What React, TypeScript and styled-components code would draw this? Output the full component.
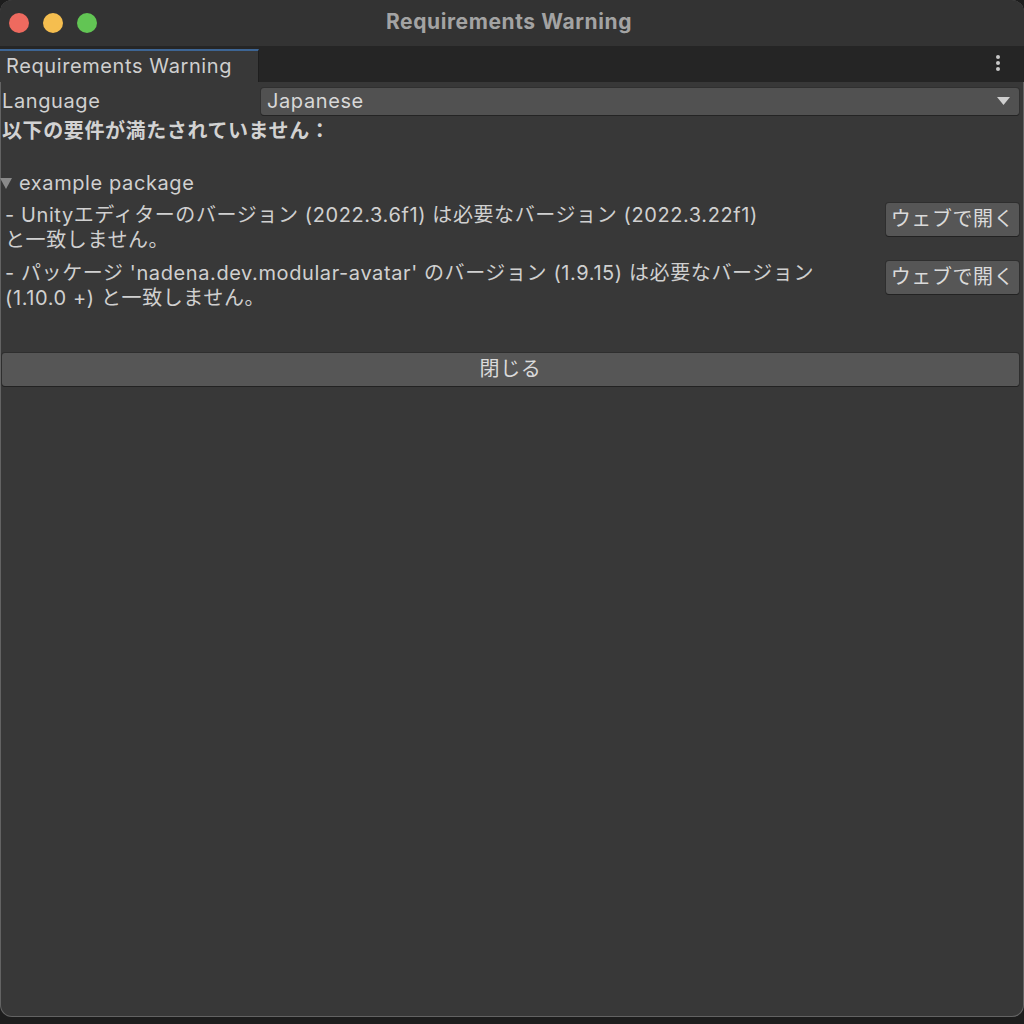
import React from "react";
import styled, { createGlobalStyle } from "styled-components";

const Global = createGlobalStyle`
  html, body { margin: 0; padding: 0; background: #1d1d1d; }
  body { font-family: Inter, "Noto Sans CJK JP", sans-serif; letter-spacing: 0.6px; }
  * { box-sizing: border-box; }
`;

const Window = styled.div`
  width: 1024px;
  height: 1017px;
  background: #383838;
  border-radius: 12px;
  overflow: hidden;
  display: flex;
  flex-direction: column;
  box-shadow: inset 0 0 0 1px rgba(255, 255, 255, 0.22);
  position: relative;
`;

const TitleBar = styled.div`
  height: 46px;
  flex: 0 0 46px;
  background: #333333;
  display: flex;
  align-items: center;
  padding-left: 9px;
  position: relative;
`;

const Lights = styled.div`
  display: flex;
  gap: 14px;
`;

const Light = styled.span<{ $c: string }>`
  width: 20px;
  height: 20px;
  border-radius: 50%;
  background: ${(p) => p.$c};
`;

const Title = styled.div`
  position: absolute;
  left: 0;
  right: 0;
  top: 0;
  height: 46px;
  line-height: 43px;
  text-align: center;
  padding-right: 6px;
  font-weight: 700;
  font-size: 21px;
  letter-spacing: 0.6px;
  color: #a3a3a3;
  pointer-events: none;
`;

const TabBar = styled.div`
  height: 36px;
  flex: 0 0 36px;
  background: #252525;
  display: flex;
  align-items: flex-end;
  justify-content: space-between;
`;

const Tab = styled.div`
  width: 259px;
  height: 33px;
  background: #383838;
  border-top: 2px solid #3d6594;
  border-right: 1px solid #1e1e1e;
  color: #cfcfcf;
  font-size: 20px;
  line-height: 30px;
  padding-left: 6px;
  white-space: nowrap;
`;

const Kebab = styled.div`
  width: 52px;
  height: 36px;
  display: flex;
  flex-direction: column;
  align-items: center;
  justify-content: center;
  gap: 2px;
  padding-bottom: 2px;
  align-self: stretch;
  span {
    width: 4px;
    height: 4px;
    border-radius: 50%;
    background: #c8c8c8;
  }
`;

const Content = styled.div`
  display: flex;
  flex-direction: column;
  padding: 4px 5px 0 2px;
  color: #d0d0d0;
  font-size: 20px;
`;

const LangRow = styled.div`
  display: flex;
  align-items: center;
  height: 29px;
`;

const LangLabel = styled.div`
  width: 259px;
  flex: 0 0 259px;
  line-height: 28px;
`;

const Dropdown = styled.div`
  flex: 1;
  height: 27px;
  margin-top: 1px;
  background: #515151;
  border-radius: 3px;
  box-shadow: 0 1px 0 #242424, 0 0 0 1px #303030;
  display: flex;
  align-items: center;
  justify-content: space-between;
  padding: 0 9px 0 6px;
  color: #d8d8d8;
  line-height: 27px;
`;

const Arrow = styled.svg`
  width: 13px;
  height: 8px;
  display: block;
`;

const Heading = styled.div`
  font-weight: 700;
  line-height: 26px;
  margin-top: 3px;
  color: #d2d2d2;
`;

const Blank = styled.div`
  height: 26px;
`;

const Foldout = styled.div`
  display: flex;
  align-items: center;
  line-height: 26px;
  margin-left: -2px;
  gap: 7px;
`;

const Items = styled.div`
  display: flex;
  flex-direction: column;
  gap: 8px;
  margin-top: 7px;
`;

const Item = styled.div`
  display: flex;
  align-items: flex-start;
  justify-content: space-between;
`;

const ItemText = styled.div`
  padding-left: 3px;
  line-height: 25px;
  width: 870px;
`;

const Button = styled.button<{ $wide?: boolean }>`
  font-family: inherit;
  font-size: 20px;
  letter-spacing: 0.6px;
  color: #dadada;
  background: #565656;
  border: none;
  border-radius: 3px;
  box-shadow: 0 1px 0 #222222, 0 0 0 1px #2e2e2e;
  height: 33px;
  line-height: 33px;
  padding: 0;
  width: ${(p) => (p.$wide ? "100%" : "133px")};
  flex: 0 0 auto;
  text-align: center;
`;

const CloseWrap = styled.div`
  margin-top: 42px;
  display: flex;
`;

export default function App() {
  return (
    <>
      <Global />
      <Window>
        <TitleBar>
          <Lights>
            <Light $c="#ee6a5f" />
            <Light $c="#f5be4f" />
            <Light $c="#62c554" />
          </Lights>
          <Title>Requirements Warning</Title>
        </TitleBar>
        <TabBar>
          <Tab>Requirements Warning</Tab>
          <Kebab>
            <span />
            <span />
            <span />
          </Kebab>
        </TabBar>
        <Content>
          <LangRow>
            <LangLabel>Language</LangLabel>
            <Dropdown>
              <span>Japanese</span>
              <Arrow viewBox="0 0 13 8">
                <polygon points="0,0 13,0 6.5,8" fill="#cfcfcf" />
              </Arrow>
            </Dropdown>
          </LangRow>
          <Heading>以下の要件が満たされていません：</Heading>
          <Blank />
          <Foldout>
            <svg width="12" height="11" viewBox="0 0 12 11">
              <polygon points="0,0 12,0 6,11" fill="#8a8a8a" />
            </svg>
            <span>example package</span>
          </Foldout>
          <Items>
            <Item>
              <ItemText>
                - Unityエディターのバージョン (2022.3.6f1) は必要なバージョン (2022.3.22f1)
                <br />
                と一致しません。
              </ItemText>
              <Button>ウェブで開く</Button>
            </Item>
            <Item>
              <ItemText>
                - パッケージ 'nadena.dev.modular-avatar' のバージョン (1.9.15) は必要なバージョン
                <br />
                (1.10.0 +) と一致しません。
              </ItemText>
              <Button>ウェブで開く</Button>
            </Item>
          </Items>
          <CloseWrap>
            <Button $wide>閉じる</Button>
          </CloseWrap>
        </Content>
      </Window>
    </>
  );
}
